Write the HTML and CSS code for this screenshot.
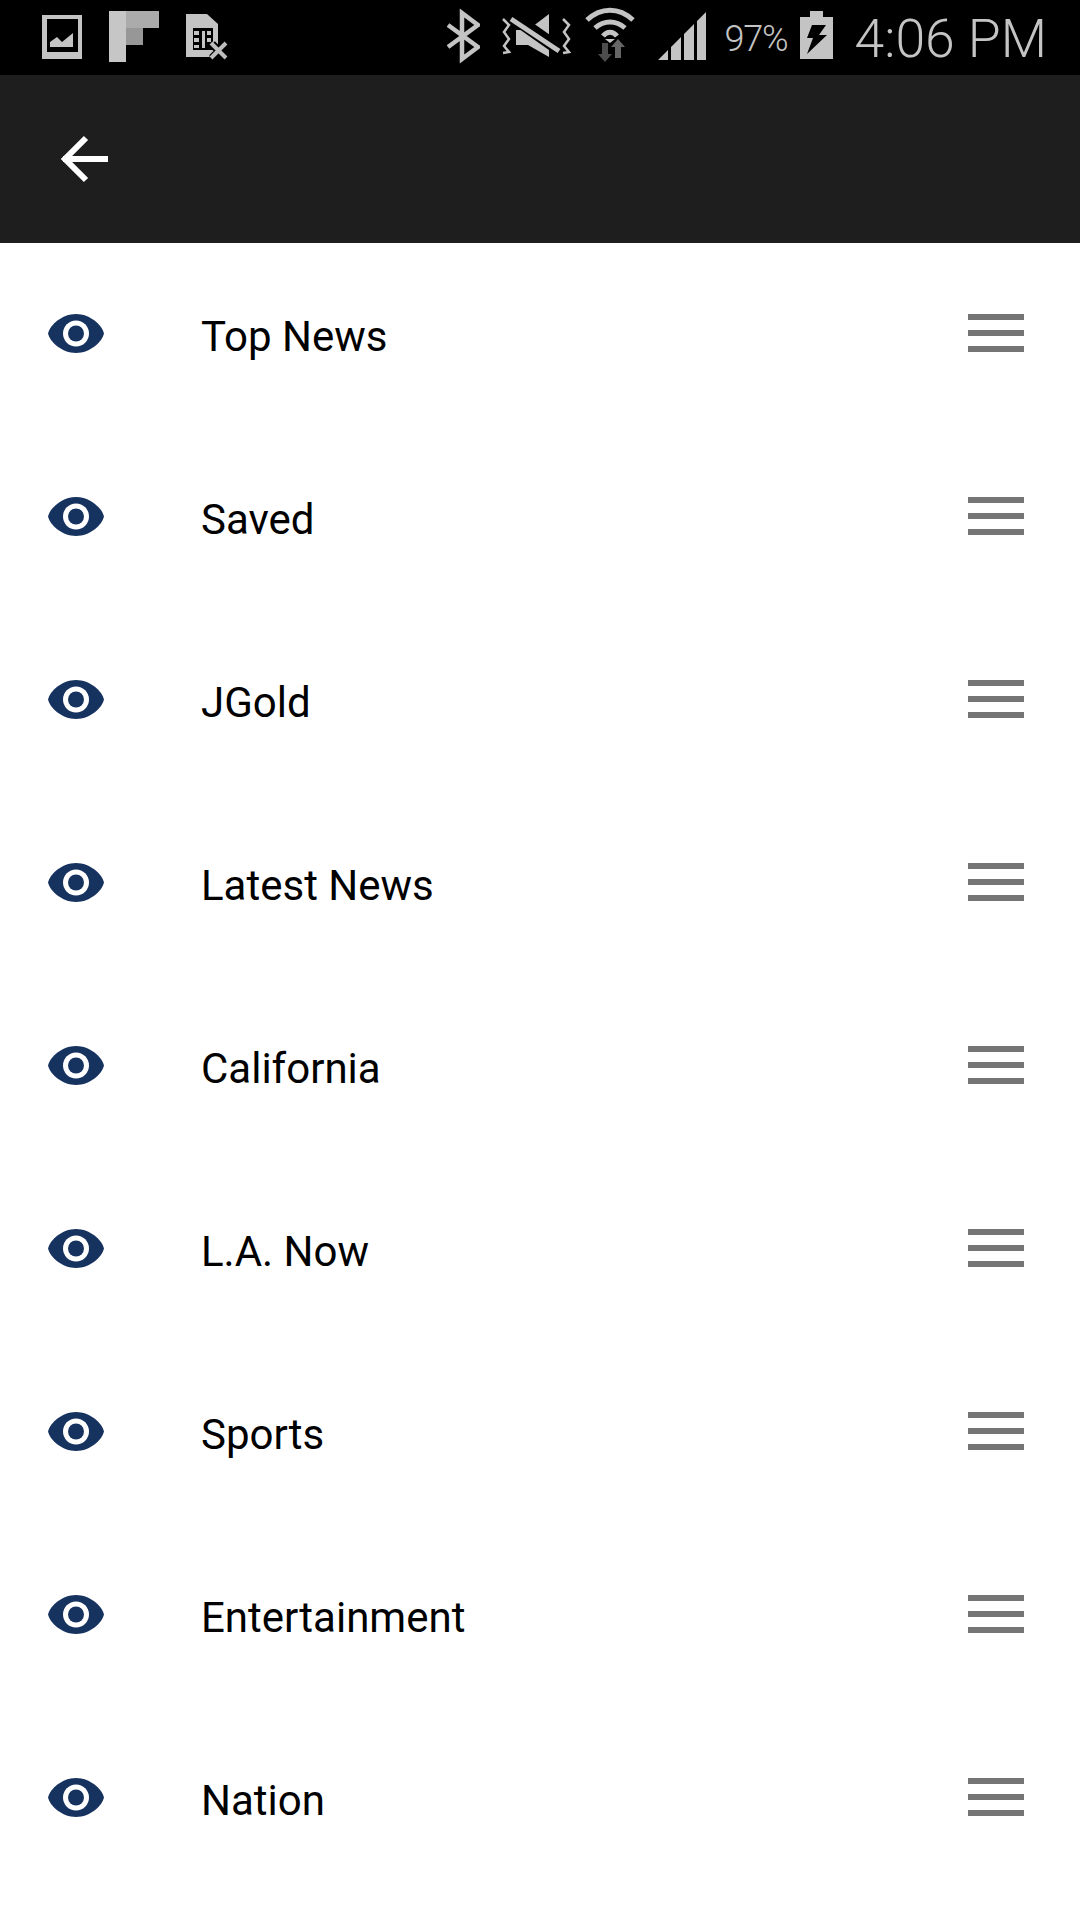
FILE: index.html
```html
<!DOCTYPE html>
<html lang="en">

<head>
  <meta charset="UTF-8" />
  <title>Sections</title>
  <link rel="stylesheet" href="styles.css">
</head>

<body>

  <svg class="defs" width="0" height="0">
    <symbol id="eye" viewBox="0 0 56 39">
      <path d="M0 19.5C2 11 14 0 28 0s26 11 28 19.5C54 28 42 39 28 39S2 28 0 19.5z" fill="#16325f" />
      <circle cx="28" cy="19.5" r="13" fill="#fff" />
      <circle cx="28" cy="19.5" r="8" fill="#16325f" />
    </symbol>
    <symbol id="drag" viewBox="0 0 56 38">
      <rect width="56" height="6" y="0" fill="#757575" />
      <rect width="56" height="6" y="16" fill="#757575" />
      <rect width="56" height="6" y="32" fill="#757575" />
    </symbol>
  </svg>

  <div class="status">
    <div class="status-left">
      <svg width="40" height="75" viewBox="0 0 40 75">
        <path d="M0 15h40v44H0z M5 19v33h31V19z" fill="#c4c4c4" fill-rule="evenodd" />
        <path d="M8 47v-5l7-5 5 5 11-9v14z" fill="#c4c4c4" />
      </svg>
      <svg width="50" height="75" viewBox="0 0 50 75">
        <rect x="0" y="11" width="17" height="51" fill="#c6c6c6" />
        <rect x="17" y="11" width="33" height="17" fill="#ababab" />
        <rect x="17" y="28" width="17" height="17" fill="#979797" />
      </svg>
      <svg width="42" height="75" viewBox="0 0 42 75">
        <path d="M0 14h21l11 10v24l-9 9H0z" fill="#c4c4c4" />
        <rect x="7" y="28" width="20" height="22" fill="#000" />
        <path d="M8 31h5v4H8zM8 38h5v4H8zM8 45h5v3H8zM16 31h3v17h-3zM21 31h4v4h-4zM21 38h4v4h-4z" fill="#c4c4c4" />
        <path d="M26 44l14 14M40 44L26 58" stroke="#000" stroke-width="8" />
        <path d="M25 43l15 15M40 43L25 58" stroke="#bdbdbd" stroke-width="4" />
      </svg>
    </div>
    <div class="status-right">
      <svg width="33" height="75" viewBox="0 0 33 75">
        <path d="M1 25l30 22-16 12V13l16 12L1 47" fill="none" stroke="#c4c4c4" stroke-width="4.5" />
      </svg>
      <svg class="ic-mute" width="70" height="75" viewBox="0 0 70 75">
        <path d="M15 30h12l21-16v43L27 45H15z" fill="#c4c4c4" />
        <path d="M8 14l54 38" stroke="#000" stroke-width="13" />
        <path d="M10 19l48 32" stroke="#c4c4c4" stroke-width="5" />
        <path d="M2 19l6 6-5 7 5 7-5 7 5 6-6 1M62 19l6 6-5 7 5 7-5 7 5 6-6 1" fill="none" stroke="#c4c4c4" stroke-width="2.5" />
      </svg>
      <svg class="ic-wifi" width="50" height="75" viewBox="0 0 50 75">
        <path d="M2 20C16 7 34 7 48 20" fill="none" stroke="#c4c4c4" stroke-width="5" />
        <path d="M10 28C19 20 31 20 40 28" fill="none" stroke="#c4c4c4" stroke-width="5" />
        <path d="M18 36c4-5 10-5 14 0" fill="none" stroke="#c4c4c4" stroke-width="5" />
        <path d="M20 39h10l-5 4z" fill="#c4c4c4" />
        <path d="M17 43h6v11h4l-7 8-7-8h4z" fill="#4d4d4d" />
        <path d="M30 58V47h-4l7-8 7 8h-4v11z" fill="#666" />
      </svg>
      <svg class="ic-signal" width="48" height="75" viewBox="0 0 48 75">
        <path d="M0 60l10-10v10zM13 47l10-10v23H13zM26 34l10-10v36H26zM39 21l9-9v48h-9z" fill="#c4c4c4" />
      </svg>
      <span class="pct">97%</span>
      <svg class="ic-batt" width="33" height="75" viewBox="0 0 33 75">
        <path d="M10 11h13v6h10v42H0V17h10z" fill="#c4c4c4" />
        <path d="M12 25h14l-7 10h8L7 54l6-16H7z" fill="#000" />
      </svg>
      <span class="clock">4:06 PM</span>
    </div>
  </div>

  <div class="toolbar">
    <svg class="back" width="48" height="48" viewBox="0 0 48 48">
      <path d="M3 24h45M26 3L5 24l21 21" fill="none" stroke="#fff" stroke-width="6" />
    </svg>
  </div>

  <ul class="sections">
    <li class="row">
      <svg class="eye"><use href="#eye" /></svg>
      <span class="name">Top News</span>
      <svg class="drag"><use href="#drag" /></svg>
    </li>
    <li class="row">
      <svg class="eye"><use href="#eye" /></svg>
      <span class="name">Saved</span>
      <svg class="drag"><use href="#drag" /></svg>
    </li>
    <li class="row">
      <svg class="eye"><use href="#eye" /></svg>
      <span class="name">JGold</span>
      <svg class="drag"><use href="#drag" /></svg>
    </li>
    <li class="row">
      <svg class="eye"><use href="#eye" /></svg>
      <span class="name">Latest News</span>
      <svg class="drag"><use href="#drag" /></svg>
    </li>
    <li class="row">
      <svg class="eye"><use href="#eye" /></svg>
      <span class="name">California</span>
      <svg class="drag"><use href="#drag" /></svg>
    </li>
    <li class="row">
      <svg class="eye"><use href="#eye" /></svg>
      <span class="name">L.A. Now</span>
      <svg class="drag"><use href="#drag" /></svg>
    </li>
    <li class="row">
      <svg class="eye"><use href="#eye" /></svg>
      <span class="name">Sports</span>
      <svg class="drag"><use href="#drag" /></svg>
    </li>
    <li class="row">
      <svg class="eye"><use href="#eye" /></svg>
      <span class="name">Entertainment</span>
      <svg class="drag"><use href="#drag" /></svg>
    </li>
    <li class="row">
      <svg class="eye"><use href="#eye" /></svg>
      <span class="name">Nation</span>
      <svg class="drag"><use href="#drag" /></svg>
    </li>
  </ul>

</body>

</html>
```

FILE: styles.css
```css
html,
body {
  margin: 0;
  padding: 0;
}

body {
  width: 1080px;
  height: 1920px;
  overflow: hidden;
  background: #fff;
  font-family: Roboto, "Liberation Sans", sans-serif;
}

.defs {
  display: block;
  height: 0;
}

.status {
  height: 75px;
  background: #000;
  color: #c4c4c4;
  display: flex;
  justify-content: space-between;
  padding: 0 33px 0 42px;
}

.status-left,
.status-right {
  display: flex;
  align-items: center;
}

.status-left {
  gap: 27px;
}

.ic-mute {
  margin-left: 21px;
}

.ic-wifi {
  margin-left: 14px;
}

.ic-signal {
  margin-left: 23px;
}

.pct {
  margin-left: 19px;
  font-size: 36px;
  font-weight: 300;
  letter-spacing: -1.2px;
  white-space: nowrap;
  padding-top: 2px;
}

.ic-batt {
  margin-left: 13px;
}

.clock {
  margin-left: 21px;
  padding-top: 2px;
  font-size: 53.5px;
  font-weight: 300;
  white-space: nowrap;
  line-height: 73px;
}

.toolbar {
  height: 168px;
  background: #1e1e1e;
  display: flex;
  align-items: center;
  padding-left: 60px;
}

.sections {
  list-style: none;
  margin: 0;
  padding: 0;
}

.row {
  box-sizing: border-box;
  height: 183px;
  display: flex;
  align-items: center;
  padding: 0 56px 2px 48px;
}

.eye {
  width: 56px;
  height: 39px;
  flex: none;
}

.name {
  margin-left: 97px;
  flex: 1;
  font-size: 42px;
  color: #000;
  padding-top: 5px;
}

.drag {
  width: 56px;
  height: 38px;
  flex: none;
  margin-bottom: 1px;
}
```
